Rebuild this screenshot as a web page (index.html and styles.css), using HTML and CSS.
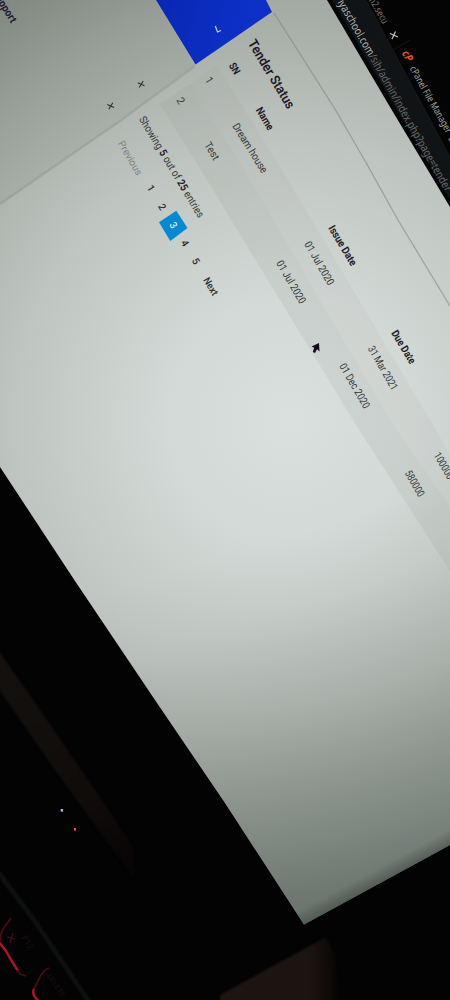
FILE: index.html
```html
<!DOCTYPE html>
<html lang="en">
<head>
<meta charset="utf-8">
<title>Tender Status</title>
<link rel="stylesheet" href="styles.css">
</head>
<body>
<svg class="scene" viewBox="0 0 450 1000" width="450" height="1000">
  <defs>
    <radialGradient id="glow" gradientUnits="userSpaceOnUse" cx="290" cy="420" r="560">
      <stop offset="0" stop-color="#dae0dd"/>
      <stop offset=".22" stop-color="#d3d9d6"/>
      <stop offset=".5" stop-color="#bec4bf"/>
      <stop offset=".75" stop-color="#a3a9a3"/>
      <stop offset="1" stop-color="#7d857e"/>
    </radialGradient>
    <linearGradient id="side" gradientUnits="userSpaceOnUse" x1="40" y1="0" x2="120" y2="130">
      <stop offset="0" stop-color="#646b62" stop-opacity=".25"/>
      <stop offset="1" stop-color="#757c73" stop-opacity=".14"/>
    </linearGradient>
    <linearGradient id="fall" gradientUnits="userSpaceOnUse" x1="235" y1="550" x2="340" y2="890">
      <stop offset="0" stop-color="#505c55" stop-opacity="0"/>
      <stop offset=".2" stop-color="#505c55" stop-opacity=".04"/>
      <stop offset=".5" stop-color="#505c55" stop-opacity=".2"/>
      <stop offset="1" stop-color="#505c55" stop-opacity=".56"/>
    </linearGradient>
    <linearGradient id="blue" gradientUnits="userSpaceOnUse" x1="165" y1="0" x2="255" y2="30">
      <stop offset="0" stop-color="#0929b4"/>
      <stop offset="1" stop-color="#0d30c8"/>
    </linearGradient>
    <linearGradient id="edge" gradientUnits="userSpaceOnUse" x1="376" y1="886" x2="369" y2="873">
      <stop offset="0" stop-color="#303831" stop-opacity=".45"/>
      <stop offset="1" stop-color="#303831" stop-opacity="0"/>
    </linearGradient>
    <linearGradient id="rug" gradientUnits="userSpaceOnUse" x1="220" y1="0" x2="340" y2="0">
      <stop offset="0" stop-color="#1c1512"/>
      <stop offset=".75" stop-color="#1c1411"/>
      <stop offset="1" stop-color="#050403"/>
    </linearGradient>
    <linearGradient id="strip" gradientUnits="userSpaceOnUse" x1="0" y1="660" x2="135" y2="870">
      <stop offset="0" stop-color="#14110e"/>
      <stop offset=".65" stop-color="#110c0a"/>
      <stop offset="1" stop-color="#080405"/>
    </linearGradient>
    <filter id="soft" color-interpolation-filters="sRGB"><feGaussianBlur stdDeviation="1"/></filter>
    <filter id="haze" color-interpolation-filters="sRGB" x="-20%" y="-20%" width="140%" height="140%"><feGaussianBlur stdDeviation=".6"/></filter>
  </defs>

  <!-- desk and keyboard -->
  <rect class="room" width="450" height="1000"/>
  <g filter="url(#soft)">
    <path fill="url(#strip)" d="M-2 650L32 698L95 790L133 847L135 880L100 832L50 763L-2 688Z"/>
    <path fill="url(#rug)" d="M220 995L326 937L335 955L340 1002H220Z"/>
    <path class="deck" d="M-2 872L34 920L89 1002"/>
  </g>
  <g filter="url(#haze)">
    <path class="key dim" d="M11 918L3 929Q0 934 1 941"/>
    <path class="key" d="M-1 942L6 951L11 960L18 971"/>
    <path class="key dim" d="M17 970L20 974L26 976"/>
    <path class="key dim" d="M49 968Q43 970 39 979L34 989"/>
    <path class="key" d="M34 989Q32 993 35 997L39 1002"/>
    <text class="legend" transform="translate(21 938) rotate(56)">F12</text>
    <text class="legend small" transform="translate(47 976) rotate(56)" textLength="26" lengthAdjust="spacingAndGlyphs">DELETE</text>
    <path class="legend-x" d="M7 937L15 939M13 933L10 943"/>
  </g>
  <rect class="led-w" x="60.700" y="809" width="2.300" height="2.600"/>
  <rect class="led-r" x="74" y="828" width="2" height="2.600"/>

  <!-- lit panel -->
  <path fill="url(#glow)" d="M0 0H450V845L304 924.500L225 803L155 700L75 581L0 467Z"/>
  <path fill="url(#fall)" d="M450 450V845L304 924.500L225 803L155 700L75 581L0 467Z"/>
  <path fill="url(#edge)" d="M304 924.500L450 845V815L293 908Z"/>
  <path fill="url(#side)" d="M0 0H156L195 65L120 121L0 204Z"/>
  <path class="shade" d="M195 66L120 121L0 204" filter="url(#haze)"/>
  <path class="line" d="M274 13L335 109Q368 165 398 220L450 306" filter="url(#haze)"/>
  <path class="header" d="M156 0H266L272 12L195.500 64.500Z" fill="url(#blue)"/>
  <path class="chevron" d="M215.300 26L217.500 32L221 30.500"/>

  <!-- table rows -->
  <path class="row-a" d="M217 65L288 180L430 420L450 455V507L390 420L250 180L190 84Z"/>
  <path class="row-b" d="M190 84L250 180L390 420L450 507V571L353 420L207 180L160 104Z"/>

  <g class="ui">
    <text class="b" transform="translate(-8 -7) rotate(58)" textLength="36" lengthAdjust="spacingAndGlyphs">Support</text>
    <path class="plus" d="M137.800 82.800L144.500 85.800M143.200 81L139.200 87.500M107.300 104.500L114 107.500M112.800 102.800L108.800 109.200"/>
    <text class="title" transform="translate(247.500 43) rotate(59)" textLength="78" lengthAdjust="spacingAndGlyphs">Tender Status</text>
    <text class="b" transform="translate(228.500 65.500) rotate(59)" textLength="11.500" lengthAdjust="spacingAndGlyphs">SN</text>
    <text class="b" transform="translate(255.500 110) rotate(59)" textLength="24.600" lengthAdjust="spacingAndGlyphs">Name</text>
    <text class="b" transform="translate(328 228) rotate(59)" textLength="45" lengthAdjust="spacingAndGlyphs">Issue Date</text>
    <text class="b" transform="translate(391 333) rotate(59)" textLength="37" lengthAdjust="spacingAndGlyphs">Due Date</text>
    <text transform="translate(204.500 79.500) rotate(59)">1</text>
    <text transform="translate(232 126) rotate(58)" textLength="56.500" lengthAdjust="spacingAndGlyphs">Dream house</text>
    <text transform="translate(304 244) rotate(60)" textLength="48.500" lengthAdjust="spacingAndGlyphs">01 Jul 2020</text>
    <text transform="translate(367.500 348.500) rotate(60)" textLength="49" lengthAdjust="spacingAndGlyphs">31 Mar 2021</text>
    <text transform="translate(433.500 455) rotate(60)" textLength="29" lengthAdjust="spacingAndGlyphs">100000</text>
    <text transform="translate(176 100) rotate(59)">2</text>
    <text transform="translate(204 144.700) rotate(59)" textLength="19" lengthAdjust="spacingAndGlyphs">Test</text>
    <text transform="translate(276 263) rotate(60)" textLength="48" lengthAdjust="spacingAndGlyphs">01 Jul 2020</text>
    <text transform="translate(339 366) rotate(60)" textLength="50" lengthAdjust="spacingAndGlyphs">01 Dec 2020</text>
    <text transform="translate(404.500 473) rotate(60)" textLength="28.500" lengthAdjust="spacingAndGlyphs">580000</text>
    <text transform="translate(138.700 119) rotate(59)" textLength="116" lengthAdjust="spacingAndGlyphs">Showing <tspan class="b">5</tspan> out of <tspan class="b">25</tspan> entries</text>
    <text class="m muted" transform="translate(117.700 143.200) rotate(60)" textLength="38" lengthAdjust="spacingAndGlyphs">Previous</text>
    <text class="m" transform="translate(146.500 187.500) rotate(59)">1</text>
    <text class="m" transform="translate(157.800 206.300) rotate(59)">2</text>
    <path class="current" d="M159 222.300L176.300 210.700L187.500 228L170.300 241Z"/>
    <text class="m on" transform="translate(169 224.500) rotate(59)">3</text>
    <text class="m" transform="translate(180.500 242.500) rotate(59)">4</text>
    <text class="m" transform="translate(191.500 260.500) rotate(59)">5</text>
    <text class="m" transform="translate(203 280) rotate(59)" textLength="19" lengthAdjust="spacingAndGlyphs">Next</text>
  </g>
  <path class="cursor" d="M319 343L311.500 346.500L314.200 347.800L312.800 352L315 353L317 349.300L319.500 351.500Z"/>

  <!-- browser chrome -->
  <path class="chrome" d="M327 0H450V207L390 107Z"/>
  <path class="urlbar" d="M332 0H366L393 50L450 157V199L394 105Z"/>
  <path class="tabline" d="M393 50L410 40M366 0L393 50L450 157"/>
  <g class="browser">
    <text class="url" text-anchor="end" transform="translate(368.500 56.500) rotate(60)" textLength="70" lengthAdjust="spacingAndGlyphs">triyaschool.com</text>
    <text class="path" transform="translate(368.500 56.500) rotate(60.500)" textLength="156" lengthAdjust="spacingAndGlyphs">/sih/admin/index.php?page=tender</text>
    <text class="tab old" text-anchor="end" transform="translate(383 24.500) rotate(60)" textLength="31" lengthAdjust="spacingAndGlyphs">m2.secu</text>
    <path class="close" d="M390 33.500L398 37M395.500 31.500L392 39"/>
    <text class="logo" transform="translate(401.500 53) rotate(60)" textLength="11" lengthAdjust="spacingAndGlyphs">cP</text>
    <text class="tab" transform="translate(409.500 68.500) rotate(60.500)" textLength="75" lengthAdjust="spacingAndGlyphs">cPanel File Manager</text>
    <text class="tab" transform="translate(447.500 138) rotate(60)">v</text>
  </g>
</svg>
</body>
</html>
```
FILE: styles.css
```css
body {
  margin: 0;
  background: #030303;
}

.scene {
  display: block;
  overflow: hidden;
}

.room { fill: #030303; }
.deck { fill: none; stroke: #0f1211; stroke-width: 4.5; }
.key { fill: none; stroke: #b01428; stroke-width: 2.4; }
.key.dim { stroke: #4a0a12; stroke-width: 1.8; }
.legend { font: 9px Roboto, sans-serif; fill: #240d0f; }
.legend.small { font-size: 7px; }
.legend-x { stroke: #4a0d15; stroke-width: 1.2; }
.led-w { fill: #b4b2e8; }
.led-r { fill: #f0523e; }

.shade { fill: none; stroke: #7f877e; stroke-opacity: .3; stroke-width: 2.4; }
.line { fill: none; stroke: #737b74; stroke-opacity: .5; stroke-width: 1.3; }
.chevron { fill: none; stroke: #c6d2ef; stroke-width: 1.2; }
.row-a { fill: #8b938c; fill-opacity: .07; }
.row-b { fill: #89918a; fill-opacity: .13; }

.ui text {
  font-family: Roboto, sans-serif;
  font-size: 10.7px;
  fill: #363a38;
}
.ui .b { font-weight: 700; fill: #1f1a2b; }
.ui .title { font-size: 13.5px; font-weight: 600; fill: #1c1628; }
.ui .m { font-weight: 500; font-size: 10px; fill: #292b2f; }
.ui .muted { font-weight: 400; fill: #7c837e; }
.ui .on { fill: #d5effc; }
.current { fill: #0788d2; }
.plus { fill: none; stroke: #2d302e; stroke-width: 1.1; }
.cursor { fill: #130b1b; }

.chrome { fill: #040405; }
.urlbar { fill: #111416; }
.tabline { fill: none; stroke: #24211f; stroke-width: .6; }
.browser text { font-family: "Noto Sans", sans-serif; font-size: 11.3px; }
.browser .url { fill: #b4b6b4; }
.browser .path { fill: #666a6a; }
.browser .tab { font-size: 9.8px; fill: #a4a6a4; }
.browser .old { fill: #777977; }
.browser .logo { font-weight: 700; font-style: italic; font-size: 11px; fill: #df5420; }
.close { fill: none; stroke: #c4c6c4; stroke-width: 1.2; }
```
